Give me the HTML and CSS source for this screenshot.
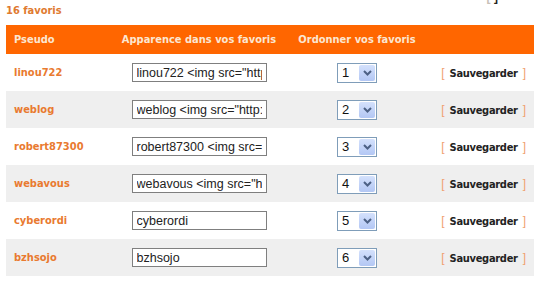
FILE: index.html
```html
<!DOCTYPE html>
<html>
  <head>
    <meta charset="utf-8">
    <link rel="stylesheet" href="styles.css">
    <title>Mes favoris</title>
  </head>
  <body>
    <div class="top-links"><span class="br grey">[</span> <span class="br dark">]</span></div>
    <div class="count">16 favoris</div>
    <table class="favs">
      <tr class="head">
        <th class="c-pseudo">Pseudo</th>
        <th class="c-look">Apparence dans vos favoris</th>
        <th class="c-order">Ordonner vos favoris</th>
        <th class="c-save"></th>
      </tr>
      <tr>
        <td class="c-pseudo"><a class="name">linou722</a></td>
        <td class="c-look"><input class="look" type="text" value='linou722 &lt;img src="http://'></td>
        <td class="c-order"><span class="pick"><span class="val">1</span><span class="btn"><svg width="9" height="6" viewBox="0 0 9 6"><path d="M1 1 L4.5 4.5 L8 1" fill="none" stroke="#4d6185" stroke-width="2"/></svg></span></span></td>
        <td class="c-save"><span class="br">[</span><a class="save">Sauvegarder</a><span class="br">]</span></td>
      </tr>
      <tr class="alt">
        <td class="c-pseudo"><a class="name">weblog</a></td>
        <td class="c-look"><input class="look" type="text" value='weblog &lt;img src="http://'></td>
        <td class="c-order"><span class="pick"><span class="val">2</span><span class="btn"><svg width="9" height="6" viewBox="0 0 9 6"><path d="M1 1 L4.5 4.5 L8 1" fill="none" stroke="#4d6185" stroke-width="2"/></svg></span></span></td>
        <td class="c-save"><span class="br">[</span><a class="save">Sauvegarder</a><span class="br">]</span></td>
      </tr>
      <tr>
        <td class="c-pseudo"><a class="name">robert87300</a></td>
        <td class="c-look"><input class="look" type="text" value='robert87300 &lt;img src="http://'></td>
        <td class="c-order"><span class="pick"><span class="val">3</span><span class="btn"><svg width="9" height="6" viewBox="0 0 9 6"><path d="M1 1 L4.5 4.5 L8 1" fill="none" stroke="#4d6185" stroke-width="2"/></svg></span></span></td>
        <td class="c-save"><span class="br">[</span><a class="save">Sauvegarder</a><span class="br">]</span></td>
      </tr>
      <tr class="alt">
        <td class="c-pseudo"><a class="name">webavous</a></td>
        <td class="c-look"><input class="look" type="text" value='webavous &lt;img src="http://'></td>
        <td class="c-order"><span class="pick"><span class="val">4</span><span class="btn"><svg width="9" height="6" viewBox="0 0 9 6"><path d="M1 1 L4.5 4.5 L8 1" fill="none" stroke="#4d6185" stroke-width="2"/></svg></span></span></td>
        <td class="c-save"><span class="br">[</span><a class="save">Sauvegarder</a><span class="br">]</span></td>
      </tr>
      <tr>
        <td class="c-pseudo"><a class="name">cyberordi</a></td>
        <td class="c-look"><input class="look" type="text" value="cyberordi"></td>
        <td class="c-order"><span class="pick"><span class="val">5</span><span class="btn"><svg width="9" height="6" viewBox="0 0 9 6"><path d="M1 1 L4.5 4.5 L8 1" fill="none" stroke="#4d6185" stroke-width="2"/></svg></span></span></td>
        <td class="c-save"><span class="br">[</span><a class="save">Sauvegarder</a><span class="br">]</span></td>
      </tr>
      <tr class="alt">
        <td class="c-pseudo"><a class="name">bzhsojo</a></td>
        <td class="c-look"><input class="look" type="text" value="bzhsojo"></td>
        <td class="c-order"><span class="pick"><span class="val">6</span><span class="btn"><svg width="9" height="6" viewBox="0 0 9 6"><path d="M1 1 L4.5 4.5 L8 1" fill="none" stroke="#4d6185" stroke-width="2"/></svg></span></span></td>
        <td class="c-save"><span class="br">[</span><a class="save">Sauvegarder</a><span class="br">]</span></td>
      </tr>
    </table>
  </body>
</html>
```

FILE: styles.css
```css
body {
  margin: 0 0 0 6px;
  background: #ffffff;
  font-family: "DejaVu Sans Condensed", "DejaVu Sans", sans-serif;
  font-size: 11px;
  color: #333333;
}

/* links above the list, mostly scrolled out of view */
.top-links {
  height: 8px;
  margin-top: -8px;
  padding-right: 36px;
  text-align: right;
  font-weight: bold;
  line-height: 10px;
}

.top-links .grey {
  color: #c8c0b8;
}

.top-links .dark {
  color: #222222;
}

.count {
  height: 21px;
  padding-top: 4px;
  color: #e07a30;
  font-weight: bold;
  line-height: 13px;
}

.favs {
  width: 528px;
  border-collapse: collapse;
  table-layout: fixed;
}

.favs th,
.favs td {
  padding: 0;
}

.favs tr {
  height: 37px;
}

.favs tr.head {
  height: 29px;
  background: #ff6600;
}

.head th {
  color: #fbe6d2;
  font-weight: bold;
  font-size: 11px;
}

.favs tr.alt {
  background: #efefef;
}

.favs .c-pseudo {
  width: 99px;
  padding-left: 8px;
  text-align: left;
}

.c-look {
  width: 172px;
  text-align: center;
}

.c-order {
  width: 144px;
  text-align: center;
}

.favs .c-save {
  width: 97px;
  padding-right: 8px;
  text-align: right;
}

.name {
  color: #e97a30;
  font-weight: bold;
  font-size: 11px;
}

.look {
  box-sizing: border-box;
  width: 135px;
  height: 19px;
  margin: 0;
  padding: 0 4px;
  border: 1px solid #7f7f7f;
  background: #ffffff;
  font-family: "Liberation Sans", Arial, sans-serif;
  font-size: 12.5px;
  color: #222222;
  vertical-align: middle;
}

.pick {
  display: inline-flex;
  box-sizing: border-box;
  width: 40px;
  height: 20px;
  border: 1px solid #7f9db9;
  background: #ffffff;
  vertical-align: middle;
  font-family: "Liberation Sans", Arial, sans-serif;
  font-size: 13px;
  color: #111111;
}

.pick .val {
  flex: 1;
  padding-left: 4px;
  line-height: 18px;
  text-align: left;
}

.pick .btn {
  display: flex;
  align-items: center;
  justify-content: center;
  width: 16px;
  margin: 1px;
  border-radius: 2px;
  background: linear-gradient(#d4e1fc, #b3c7f4);
}

.br {
  color: #f0a070;
  font-family: "Liberation Sans", Arial, sans-serif;
  font-size: 12px;
}

.save {
  margin: 0 5px;
  letter-spacing: -0.3px;
  color: #222222;
  font-weight: bold;
}
```
